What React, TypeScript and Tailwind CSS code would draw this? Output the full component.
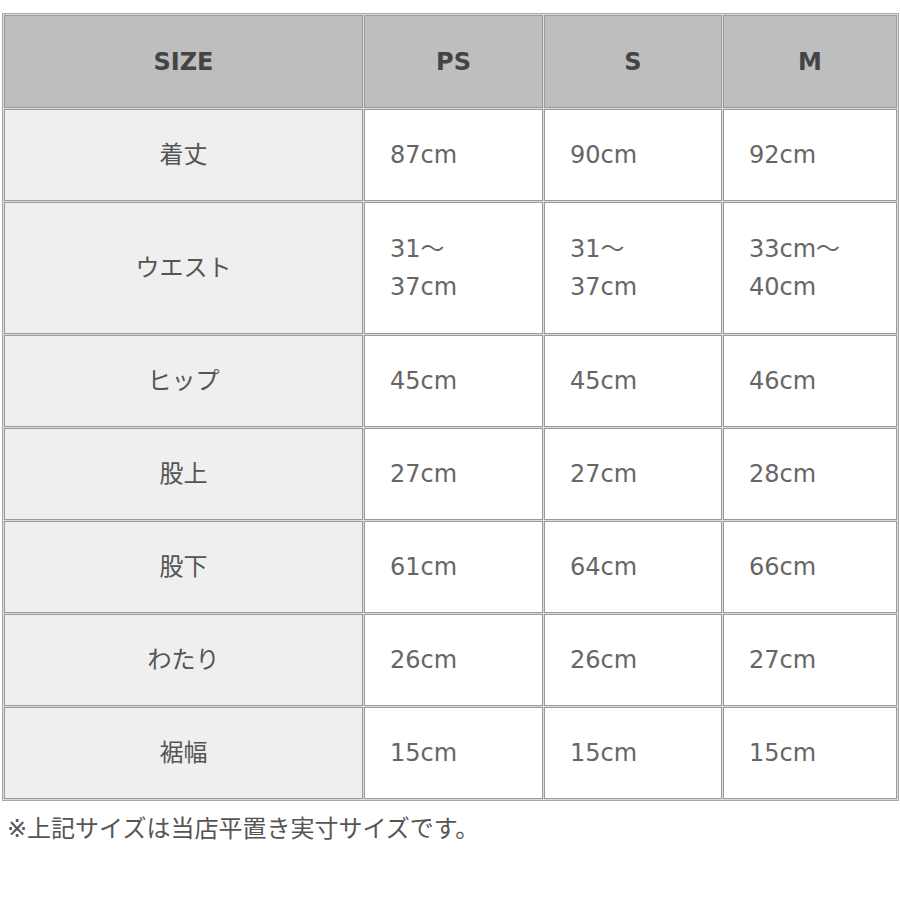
import React from 'react';

interface Row { label: string; ps: string[]; s: string[]; m: string[]; tall?: boolean; }

const ROWS: Row[] = [
  { label: '着丈', ps: ['87cm'], s: ['90cm'], m: ['92cm'] },
  { label: 'ウエスト', ps: ['31～', '37cm'], s: ['31～', '37cm'], m: ['33cm～', '40cm'], tall: true },
  { label: 'ヒップ', ps: ['45cm'], s: ['45cm'], m: ['46cm'] },
  { label: '股上', ps: ['27cm'], s: ['27cm'], m: ['28cm'] },
  { label: '股下', ps: ['61cm'], s: ['64cm'], m: ['66cm'] },
  { label: 'わたり', ps: ['26cm'], s: ['26cm'], m: ['27cm'] },
  { label: '裾幅', ps: ['15cm'], s: ['15cm'], m: ['15cm'] },
];

const FONT = { fontFamily: '"DejaVu Sans", "Noto Sans CJK JP", sans-serif' };

const Cell: React.FC<{ lines: string[] }> = ({ lines }) => (
  <td className="border border-[#9a9a9a] bg-white pl-[25px] align-middle text-left text-[24px] leading-[38px] text-[#666]">
    {lines.map((l, i) => (
      <div key={i}>{l}</div>
    ))}
  </td>
);

const App: React.FC = () => {
  return (
    <div className="min-h-[900px] w-[900px] bg-white pt-[13px]" style={FONT}>
      <table className="ml-[2px] w-[897px] table-fixed border-separate border-spacing-[1px] border border-[#a8a8a8] bg-[#dcdcdc]">
        <colgroup>
          <col className="w-[359px]" />
          <col className="w-[179px]" />
          <col className="w-[178px]" />
          <col />
        </colgroup>
        <thead>
          <tr className="h-[93px]">
            {['SIZE', 'PS', 'S', 'M'].map((h) => (
              <th key={h} className="border border-[#9a9a9a] bg-[#bebebe] text-center text-[24px] font-bold text-[#444]">
                {h}
              </th>
            ))}
          </tr>
        </thead>
        <tbody>
          {ROWS.map((r) => (
            <tr key={r.label} className={r.tall ? 'h-[132px]' : 'h-[92px]'}>
              <td className="border border-[#9a9a9a] bg-[#efefef] text-center text-[24px] text-[#555]">{r.label}</td>
              <Cell lines={r.ps} />
              <Cell lines={r.s} />
              <Cell lines={r.m} />
            </tr>
          ))}
        </tbody>
      </table>
      <p className="ml-[7px] mt-[13px] text-[24px] leading-[30px] text-[#555]">※上記サイズは当店平置き実寸サイズです。</p>
    </div>
  );
};

export default App;
